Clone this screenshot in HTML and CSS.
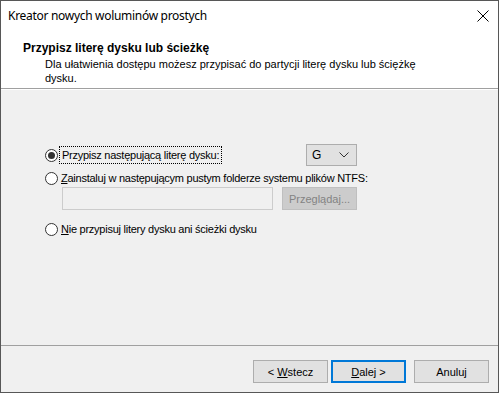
FILE: index.html
```html
<!DOCTYPE html>
<html lang="pl">
<head>
<meta charset="utf-8">
<link rel="stylesheet" href="styles.css">
</head>
<body>
<div class="window">
  <div class="titlebar">
    <span class="title">Kreator nowych woluminów prostych</span>
    <svg class="close" width="12" height="12" viewBox="0 0 12 12"><path d="M0.5 0.5 L11.5 11.5 M11.5 0.5 L0.5 11.5" stroke="#000" stroke-width="1" fill="none"/></svg>
  </div>
  <div class="header">
    <div class="h-title">Przypisz literę dysku lub ścieżkę</div>
    <div class="h-desc">Dla ułatwienia dostępu możesz przypisać do partycji literę dysku lub ściężkę dysku.</div>
  </div>
  <div class="content">
    <div class="row row1">
      <label class="opt opt1"><span class="radio checked"></span><span class="focus">Przypisz następującą literę dysku:</span></label>
      <div class="select"><span>G</span><svg width="10" height="6" viewBox="0 0 10 6"><path d="M0.5 0.5 L5 5 L9.5 0.5" stroke="#333" stroke-width="1" fill="none"/></svg></div>
    </div>
    <label class="opt row2"><span class="radio"></span><span><u>Z</u>ainstaluj w następującym pustym folderze systemu plików NTFS:</span></label>
    <div class="row row-path">
      <div class="input"></div>
      <div class="btn disabled">Prze<u>g</u>lądaj...</div>
    </div>
    <label class="opt row3"><span class="radio"></span><span><u>N</u>ie przypisuj litery dysku ani ścieżki dysku</span></label>
  </div>
  <div class="footer">
    <div class="btn"><span>&lt; <u>W</u>stecz</span></div>
    <div class="btn default"><span><u>D</u>alej &gt;</span></div>
    <div class="btn cancel"><span>Anuluj</span></div>
  </div>
</div>
</body>
</html>
```
FILE: styles.css
```css
* { box-sizing: border-box; }
html, body { margin: 0; padding: 0; }
body { width: 499px; height: 393px; overflow: hidden; font-family: "Liberation Sans", Arial, sans-serif; font-size: 11px; color: #000; }
.window { width: 499px; height: 393px; border: 1px solid #575757; display: flex; flex-direction: column; background: #f0f0f0; }
.titlebar { height: 30px; background: #fff; display: flex; align-items: center; justify-content: space-between; padding: 0 9px 0 7px; }
.title { font-family: "Noto Sans", "Liberation Sans", sans-serif; font-size: 12px; line-height: 16px; letter-spacing: -0.3px; }
.close { display: block; }
.header { height: 58px; background: #fff; border-bottom: 1px solid #a0a0a0; padding: 10px 0 0 22px; }
.h-title { font-weight: bold; font-size: 12px; line-height: 15px; }
.h-desc { padding-left: 22px; width: 420px; line-height: 14px; margin-top: 1px; }
.content { flex: 1; padding: 54px 0 0 44px; border-top: 1px solid #fff; }
.row { display: flex; align-items: center; }
.row1 { height: 22px; }
.opt { display: flex; align-items: center; height: 16px; letter-spacing: -0.25px; }
.opt1 { width: 261px; flex: none; }
.radio { width: 13px; height: 13px; border: 1px solid #333; border-radius: 50%; background: #fff; margin-right: 3px; position: relative; flex: none; }
.radio.checked::after { content: ""; position: absolute; left: 2px; top: 2px; width: 7px; height: 7px; border-radius: 50%; background: #333; }
.focus { outline: 1px dotted #000; outline-offset: 1px; padding: 0 1px; line-height: 14px; }
.select { width: 51px; height: 22px; border: 1px solid #adadad; background: #e1e1e1; display: flex; align-items: center; justify-content: space-between; padding: 0 7px 0 5px; font-size: 12px; }
.row2 { margin-top: 4px; }
.row-path { margin-top: 1px; padding-left: 17px; gap: 9px; }
.input { width: 211px; height: 23px; border: 1px solid #cccccc; background: #f0f0f0; }
.btn { width: 75px; height: 23px; border: 1px solid #adadad; background: #e1e1e1; display: flex; align-items: center; justify-content: center; }
.btn.disabled { color: #838383; border-color: #bfbfbf; background: #cccccc; }
.row3 { margin-top: 11px; }
.footer { height: 47px; border-top: 1px solid #a0a0a0; display: flex; justify-content: flex-end; align-items: flex-start; padding: 14px 9px 0 0; }
.footer .btn.default { border: 2px solid #0078d7; margin-left: 3px; }
.footer .btn.cancel { margin-left: 8px; }
u { text-decoration: underline; text-underline-offset: 1px; }
```
